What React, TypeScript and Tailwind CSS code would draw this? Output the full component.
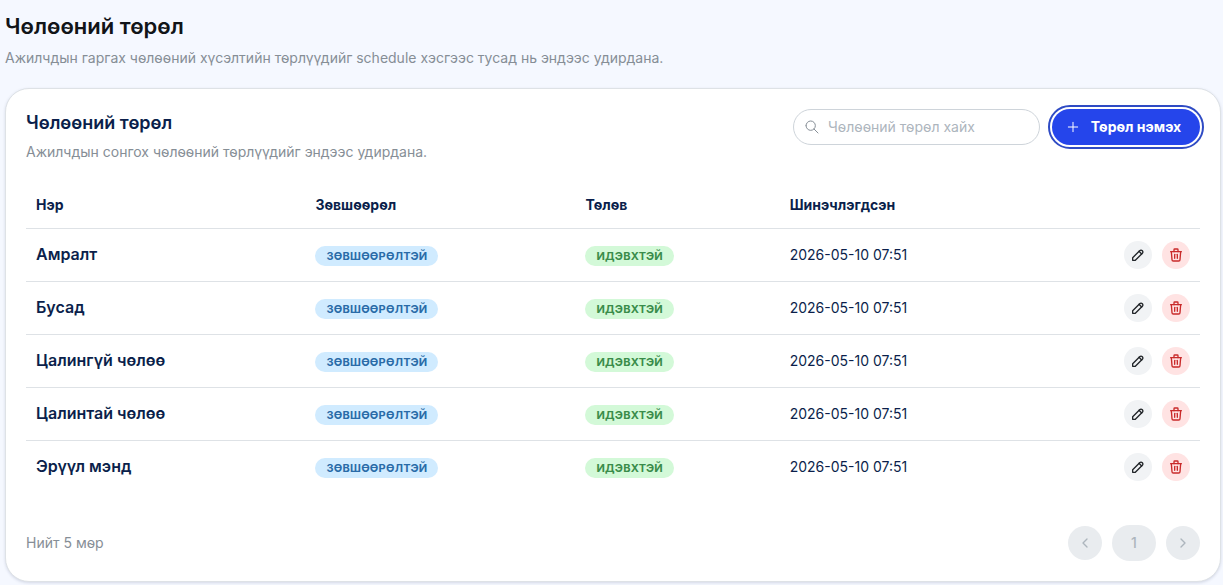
import { useState } from "react";
import {
    TbChevronLeft,
    TbChevronRight,
    TbPencil,
    TbPlus,
    TbSearch,
    TbTrash,
} from "react-icons/tb";

interface LeaveType {
    id: number;
    name: string;
    updatedAt: string;
}

const leaveTypes: LeaveType[] = [
    { id: 1, name: "Амралт", updatedAt: "2026-05-10 07:51" },
    { id: 2, name: "Бусад", updatedAt: "2026-05-10 07:51" },
    { id: 3, name: "Цалингүй чөлөө", updatedAt: "2026-05-10 07:51" },
    { id: 4, name: "Цалинтай чөлөө", updatedAt: "2026-05-10 07:51" },
    { id: 5, name: "Эрүүл мэнд", updatedAt: "2026-05-10 07:51" },
];

function LeaveRow({ item }: { item: LeaveType }) {
    return (
        <tr className="h-[53px] border-t border-[#dee2e6]">
            <td className="px-2.5 pb-0.5 text-base font-semibold">{item.name}</td>
            <td className="px-2.5">
                <span className="inline-flex h-5 items-center rounded-full bg-[#d0ebff] px-[11px] align-middle text-[11px] font-bold tracking-[0.25px] text-[#2a6ba8]">
                    ЗӨВШӨӨРӨЛТЭЙ
                </span>
            </td>
            <td className="px-2.5">
                <span className="inline-flex h-5 items-center rounded-full bg-[#d3f9d8] px-[11px] align-middle text-[11px] font-bold tracking-[0.25px] text-[#3a8c4a]">
                    ИДЭВХТЭЙ
                </span>
            </td>
            <td className="px-2.5 text-sm">{item.updatedAt}</td>
            <td className="px-2.5">
                <div className="flex justify-end gap-2.5">
                    <button aria-label={`${item.name} засах`} className="flex size-7 items-center justify-center rounded-full bg-[#f1f3f5] text-[#212529] hover:bg-gray-200">
                        <TbPencil size={16} />
                    </button>
                    <button aria-label={`${item.name} устгах`} className="flex size-7 items-center justify-center rounded-full bg-[#ffe3e3] text-[#c92a2a] hover:bg-red-200">
                        <TbTrash size={16} />
                    </button>
                </div>
            </td>
        </tr>
    );
}

export default function App() {
    const [search, setSearch] = useState("");
    const rows = leaveTypes.filter((t) => t.name.toLowerCase().includes(search.toLowerCase()));

    return (
        <main className="min-h-screen bg-[#f5f8ff] pt-3 pr-0.5 pb-1 pl-[5px] font-['Inter',sans-serif] text-[#0b1f4b]">
            <h1 className="text-[22px] leading-7 font-semibold text-[#111418]">Чөлөөний төрөл</h1>
            <p className="mt-2 text-sm leading-5 text-[#868e96]">
                Ажилчдын гаргах чөлөөний хүсэлтийн төрлүүдийг schedule хэсгээс тусад нь эндээс удирдана.
            </p>

            <section className="mt-5 rounded-3xl border border-[#dee2e6] bg-white p-5 shadow-[0_1px_3px_rgba(30,40,90,0.15)]">
                <div className="flex items-start justify-between">
                    <div>
                        <h2 className="text-lg leading-7 font-semibold">Чөлөөний төрөл</h2>
                        <p className="mt-1 text-sm leading-[22px] text-[#868e96]">
                            Ажилчдын сонгох чөлөөний төрлүүдийг эндээс удирдана.
                        </p>
                    </div>
                    <div className="flex items-center gap-3">
                        <label className="flex h-9 w-[247px] items-center gap-2 rounded-full border border-[#ced4da] bg-white px-2.5">
                            <TbSearch size={16} strokeWidth={1.5} className="shrink-0 text-[#868e96]" />
                            <input
                                type="text"
                                aria-label="Чөлөөний төрөл хайх"
                                placeholder="Чөлөөний төрөл хайх"
                                value={search}
                                onChange={(e) => setSearch(e.target.value)}
                                className="w-full min-w-0 bg-transparent text-sm outline-none placeholder:text-[#adb5bd]"
                            />
                        </label>
                        <button className="flex h-9 w-[148px] items-center justify-center gap-2.5 rounded-full bg-[#2545eb] pr-1.5 text-sm font-bold text-white outline-2 outline-offset-2 outline-[#2f4bc4]">
                            <TbPlus size={16} strokeWidth={1.5} />
                            Төрөл нэмэх
                        </button>
                    </div>
                </div>

                <table className="mt-5 w-full table-fixed border-collapse text-left">
                    <colgroup>
                        <col className="w-[23.8%]" />
                        <col className="w-[23%]" />
                        <col className="w-[17.4%]" />
                        <col />
                        <col className="w-28" />
                    </colgroup>
                    <thead>
                        <tr className="h-[45px] text-sm">
                            <th className="px-2.5 font-bold">Нэр</th>
                            <th className="px-2.5 font-bold">Зөвшөөрөл</th>
                            <th className="px-2.5 font-bold">Төлөв</th>
                            <th className="px-2.5 font-bold">Шинэчлэгдсэн</th>
                            <td />
                        </tr>
                    </thead>
                    <tbody>
                        {rows.map((item) => (
                            <LeaveRow key={item.id} item={item} />
                        ))}
                    </tbody>
                </table>

                <div className="mt-8 flex items-center justify-between">
                    <span className="text-sm text-[#868e96]">Нийт {rows.length} мөр</span>
                    <div className="flex items-center gap-2.5 text-[#adb5bd]">
                        <button disabled aria-label="Өмнөх" className="flex size-[34px] items-center justify-center rounded-full bg-[#e9ecef]">
                            <TbChevronLeft size={16} />
                        </button>
                        <button disabled className="flex h-9 w-11 items-center justify-center rounded-full bg-[#e9ecef] text-sm font-medium">
                            1
                        </button>
                        <button disabled aria-label="Дараах" className="flex size-[34px] items-center justify-center rounded-full bg-[#e9ecef]">
                            <TbChevronRight size={16} />
                        </button>
                    </div>
                </div>
            </section>
        </main>
    );
}
